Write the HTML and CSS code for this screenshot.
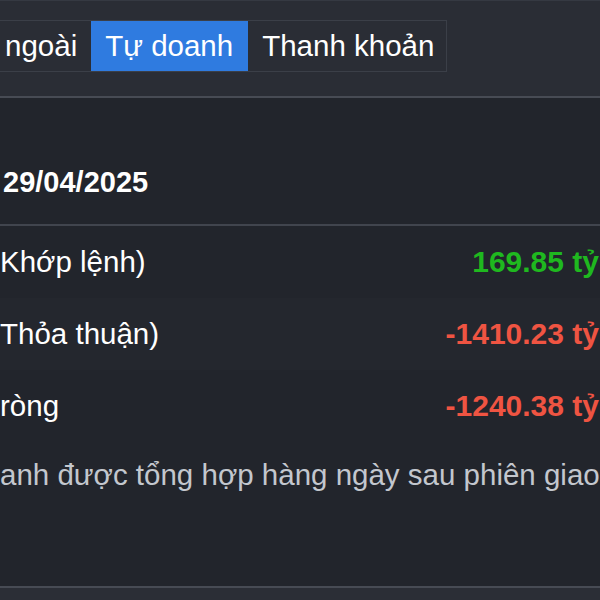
FILE: index.html
```html
<!DOCTYPE html>
<html lang="vi">
<head>
<meta charset="utf-8">
<link rel="stylesheet" href="styles.css">
</head>
<body>
<div class="page">
  <div class="top">
    <div class="tabs">
      <div class="tab first">ngoài</div>
      <div class="tab active">Tự doanh</div>
      <div class="tab">Thanh khoản</div>
    </div>
  </div>
  <div class="date">29/04/2025</div>
  <div class="rows">
    <div class="row"><span class="label">Khớp lệnh)</span><span class="val up">169.85 tỷ</span></div>
    <div class="row alt"><span class="label">Thỏa thuận)</span><span class="val down">-1410.23 tỷ</span></div>
    <div class="row"><span class="label">ròng</span><span class="val down">-1240.38 tỷ</span></div>
  </div>
  <div class="note">anh được tổng hợp hàng ngày sau phiên giao</div>
  <div class="bottom"></div>
</div>
</body>
</html>
```
FILE: styles.css
```css
html, body {
  margin: 0;
  padding: 0;
  background: #22252c;
  overflow: hidden;
}
.page {
  width: 600px;
  height: 600px;
  overflow: hidden;
  font-family: "Liberation Sans", Arial, sans-serif;
  font-size: 29.5px;
  color: #ffffff;
}
.top {
  background: #2a2d35;
  border-top: 1px solid #353942;
  border-bottom: 2px solid #474b54;
  box-sizing: border-box;
  height: 98px;
  padding-top: 19px;
}
.tabs {
  display: inline-flex;
  border: 1px solid #3b3f48;
  border-left: none;
}
.tab {
  height: 50px;
  line-height: 50px;
  padding: 0 12px 0 14px;
  color: #ffffff;
  white-space: nowrap;
}
.tab.first {
  padding-left: 5px;
  padding-right: 14px;
}
.tab.active {
  background: #2f7be0;
  padding: 0 15px 0 14px;
}
.date {
  font-size: 29px;
  font-weight: bold;
  line-height: 34px;
  padding: 67px 0 25px 3px;
  border-bottom: 2px solid #41454e;
}
.row {
  display: flex;
  justify-content: space-between;
  height: 72px;
  line-height: 72px;
  white-space: nowrap;
}
.row.alt {
  background: #24272e;
}
.label {
  color: #ffffff;
}
.val {
  font-size: 30px;
  font-weight: bold;
  padding-right: 1px;
}
.up {
  color: #1fb81f;
}
.down {
  color: #ef5442;
}
.note {
  height: 146px;
  box-sizing: border-box;
  padding-top: 16px;
  line-height: 34px;
  color: #c3c7ce;
  white-space: nowrap;
  border-bottom: 2px solid #474b54;
}
.bottom {
  height: 20px;
  background: #2b2e36;
}
```
